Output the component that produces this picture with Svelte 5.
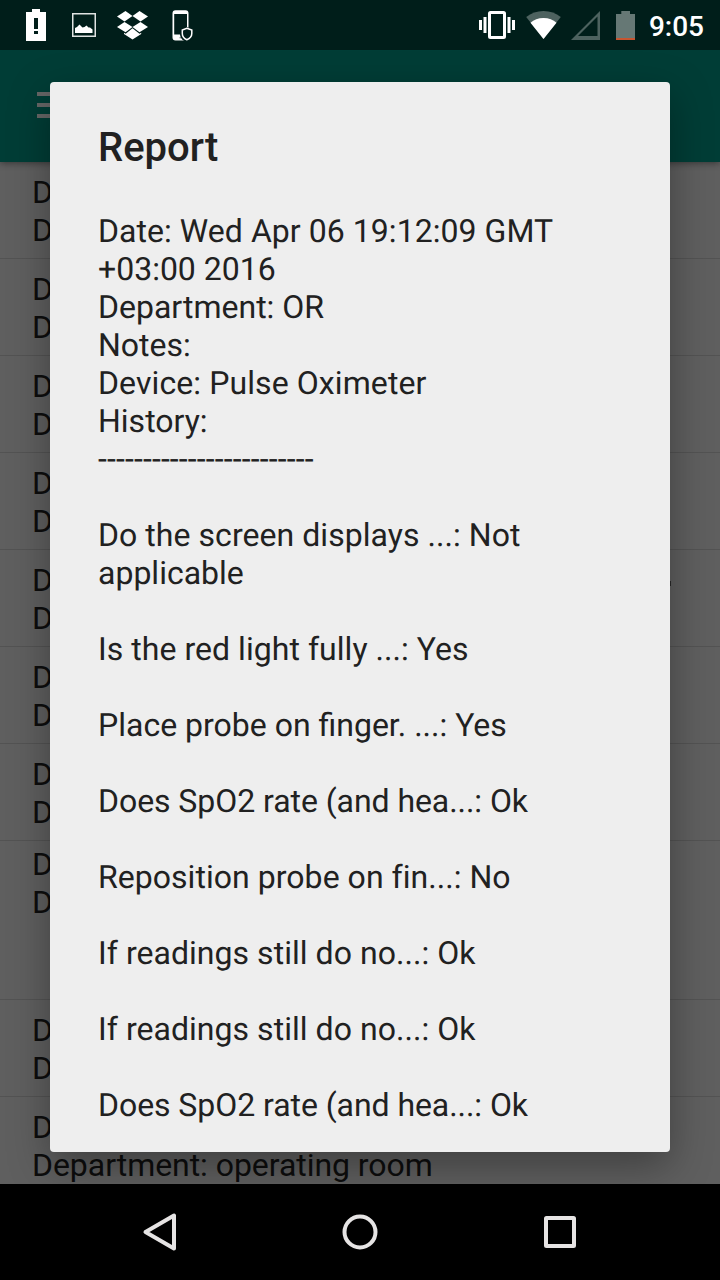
<script>
  const rows = [
    { kind: '' },
    { kind: '' },
    { kind: '' },
    { kind: '' },
    { kind: 'long' },
    { kind: '' },
    { kind: '' },
    { kind: 'tall' },
    { kind: '' },
    { kind: 'last' }
  ];
  // Each line carries its own tracking, in pixels.
  const lines = [
    ['Date: Wed Apr 06 19:12:09 GMT', 0.05],
    ['+03:00 2016', 0],
    ['Department: OR', 0],
    ['Notes:', 0],
    ['Device: Pulse Oximeter', 0.09],
    ['History:', 0],
    ['------------------------', 0.14],
    ['', 0],
    ['Do the screen displays ...: Not', 0.05],
    ['applicable', 0],
    ['', 0],
    ['Is the red light fully ...: Yes', 0.04],
    ['', 0],
    ['Place probe on finger. ...: Yes', 0],
    ['', 0],
    ['Does SpO2 rate (and hea...: Ok', -0.06],
    ['', 0],
    ['Reposition probe on fin...: No', 0.04],
    ['', 0],
    ['If readings still do no...: Ok', 0.04],
    ['', 0],
    ['If readings still do no...: Ok', 0.04],
    ['', 0],
    ['Does SpO2 rate (and hea...: Ok', -0.06]
  ];
</script>

<div class="screen">
  <header class="status">
    <div class="notices">
      <svg width="20" height="32" viewBox="26 9 20 32">
        <path fill="#fff" fill-rule="evenodd" d="M32 9h8v3h6v29H26V12h6zM34 18v11h4V18zM34 31v3h4v-3z" />
      </svg>
      <svg width="24" height="24" viewBox="72 13 24 24">
        <rect x="72.75" y="13.75" width="22.5" height="22.5" fill="none" stroke="#dfe3e2" stroke-width="1.5" />
        <path fill="#fff" d="M75 33v-5l2-1 2.500-2.500 3 3 2-.5 2-1.500 2 2 1.500 0 2.500 2v3.500z" />
      </svg>
      <svg width="31" height="29" viewBox="116.500 11 31 29">
        <g fill="#fff">
          <path d="M125 11l7 5-8 5.500-7.500-5z" />
          <path d="M139 11l8.500 5.500-7.500 5-8-5.500z" />
          <path d="M124 22l8 5-7 5.300-8.500-5.300z" />
          <path d="M140 22l7.500 5-8.500 5.300-7-5.300z" />
          <path d="M123.500 32.800l1.700 1 6.800-5.500 7 5.500 1.700-1v1.200l-8.700 5.500-8.500-5.500z" />
        </g>
      </svg>
      <svg width="21" height="31" viewBox="171.500 9.500 21 31">
        <path fill="#fff" fill-rule="evenodd" d="M175 9.700h10q3 0 3 3v24.300q0 3-3 3H175q-3 0-3-3V12.700q0-3 3-3zM173.700 13.500v20.500h12.800V13.500z" />
        <circle cx="179.700" cy="37.300" r=".7" fill="#60706d" />
        <path fill="#001e1a" stroke="#001e1a" stroke-width="4" d="M186.200 28.500l4.700 2v3q0 4-4.700 6-4.700-2-4.700-6v-3z" />
        <path fill="#001e1a" stroke="#fff" stroke-width="1.500" d="M186.300 27.800l5 1.700v3.500q0 4.200-5 6.200-4.500-2-4.500-6.200v-3.500z" />
      </svg>
    </div>
    <div class="system">
      <svg width="36" height="28" viewBox="479 11 36 28">
        <rect x="489.500" y="12.500" width="15" height="25" rx="1" fill="none" stroke="#fff" stroke-width="3" />
        <path fill="#fff" d="M479 20h3v10h-3zM483.500 17h3v16h-3zM507.500 17h3v16h-3zM512 20h3v10h-3z" />
      </svg>
      <svg width="35" height="28" viewBox="526.500 11 35 28">
        <path fill="#4d625f" d="M544 39L526.700 17Q534 11 544 11t17.300 6z" />
        <path fill="#fff" d="M544 39L531 22.700Q536 18 544 18t13 4.700z" />
      </svg>
      <svg class="signal" width="29" height="29" viewBox="570.500 11 29 29">
        <path fill="#4d625f" fill-rule="evenodd" d="M599.500 11v29h-29zM597 16.500L577.500 36H597z" />
      </svg>
      <svg class="battery" width="19" height="29" viewBox="616 10 19 29">
        <path fill="#667875" d="M621.300 10h8.700v3h5v24h-19V13h5.300z" />
        <path fill="#c75530" d="M616 37h19v2h-19z" />
      </svg>
      <span class="clock">9:05</span>
    </div>
  </header>

  <div class="toolbar">
    <div class="burger"><i></i><i></i><i></i></div>
  </div>

  <main class="list">
    {#each rows as row}
      <div class="row {row.kind}">
        <p>D</p>
        <p>{row.kind === 'last' ? 'Department: operating room' : 'D'}</p>
      </div>
    {/each}
  </main>

  <nav class="navbar">
    <svg width="120" height="96" viewBox="0 0 120 96">
      <path d="M25.500 48L54 31.500v33z" transform="translate(20 0)" />
    </svg>
    <svg width="120" height="96" viewBox="0 0 120 96">
      <circle cx="60" cy="48" r="15.500" />
    </svg>
    <svg width="120" height="96" viewBox="0 0 120 96">
      <rect x="46" y="34" width="28" height="28" rx=".5" />
    </svg>
  </nav>

  <div class="overlay">
    <section class="dialog">
      <h1>Report</h1>
      <div class="body">
        {#each lines as [text, tracking]}
          <p style:letter-spacing="{tracking}px">{text}</p>
        {/each}
      </div>
    </section>
  </div>
</div>

<style>
  :global(body) {
    margin: 0;
    background: #000;
  }
  .screen {
    position: relative;
    display: flex;
    flex-direction: column;
    width: 720px;
    height: 1280px;
    overflow: hidden;
    font-family: Roboto, sans-serif;
    font-size: 32px;
    line-height: 38px;
  }
  svg {
    display: block;
    flex: none;
  }
  p,
  h1 {
    margin: 0;
    white-space: pre;
  }
  .status {
    z-index: 3;
    flex: none;
    display: flex;
    justify-content: space-between;
    align-items: center;
    box-sizing: border-box;
    height: 50px;
    padding: 0 16px 0 26px;
    background: #001e1a;
  }
  .notices,
  .system {
    display: flex;
    align-items: center;
  }
  .notices {
    gap: 24px;
  }
  .notices svg:nth-child(2) {
    margin: 0 -3.5px 0 2px;
  }
  .system {
    gap: 11px;
  }
  .signal {
    margin: 1px 0 0 -1px;
  }
  .battery {
    margin: 0 3px 0 5px;
  }
  .clock {
    color: #fff;
    font-size: 28px;
    font-weight: 500;
    line-height: 50px;
    padding-top: 3px;
  }
  .toolbar {
    z-index: 1;
    flex: none;
    display: flex;
    align-items: center;
    height: 112px;
    padding-left: 37px;
    background: #003d36;
    box-shadow: 0 1px 7px rgba(0, 0, 0, 0.45);
  }
  .burger {
    display: grid;
    gap: 7px;
    width: 36px;
    margin-bottom: 2px;
  }
  .burger i {
    height: 4px;
    background: #666;
  }
  .list {
    flex: 1;
    min-height: 0;
    overflow: hidden;
    background: #5f5f5f;
    color: #0d0d0d;
  }
  .row {
    position: relative;
    box-sizing: border-box;
    height: 97px;
    padding: 11px 32px 0;
    border-bottom: 1px solid #535353;
  }
  .row.tall {
    height: 159px;
    padding-top: 4px;
  }
  .row.last p {
    letter-spacing: -0.05px;
  }
  .row.long::after {
    content: '';
    position: absolute;
    left: 670px;
    top: 31px;
    width: 1px;
    height: 5px;
    background: #292929;
  }
  .navbar {
    z-index: 3;
    flex: none;
    display: flex;
    justify-content: center;
    gap: 80px;
    height: 96px;
    background: #000;
  }
  .navbar svg {
    fill: none;
    stroke: #e6e4e4;
    stroke-width: 4;
    stroke-linejoin: round;
  }
  .overlay {
    position: absolute;
    z-index: 2;
    inset: 50px 0 96px;
    display: flex;
    padding: 32px 50px;
  }
  .dialog {
    flex: 1;
    box-sizing: border-box;
    padding: 43px 48px 0;
    border-radius: 4px;
    background: #eee;
    color: #212121;
    box-shadow: 0 14px 40px rgba(0, 0, 0, 0.34);
  }
  h1 {
    margin-bottom: 41px;
    font-size: 40px;
    font-weight: 500;
    line-height: 46px;
  }
  .body p {
    height: 38px;
    font-variant-ligatures: normal;
    text-rendering: geometricPrecision;
  }
</style>
